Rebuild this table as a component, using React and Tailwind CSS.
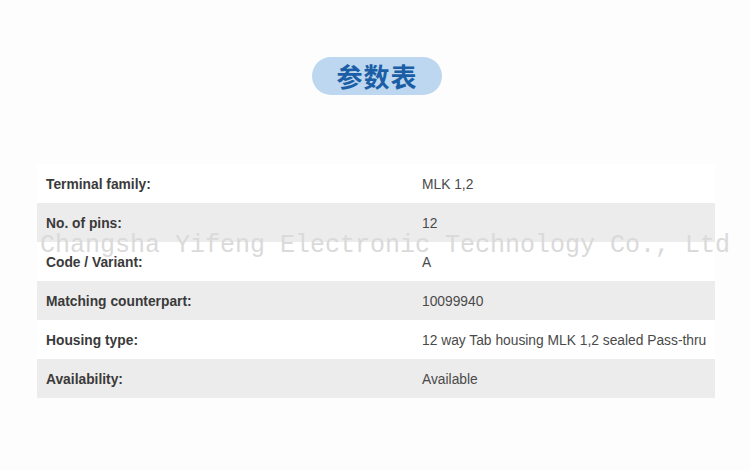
import React from "react";

const rows = [
  { label: "Terminal family:", value: "MLK 1,2" },
  { label: "No. of pins:", value: "12" },
  { label: "Code / Variant:", value: "A" },
  { label: "Matching counterpart:", value: "10099940" },
  { label: "Housing type:", value: "12 way Tab housing MLK 1,2 sealed Pass-thru" },
  { label: "Availability:", value: "Available" },
];

const App = () => {
  return (
    <div className="relative w-[750px] h-[471px] bg-[#fdfdfd] overflow-hidden font-['Liberation_Sans',Arial,sans-serif]">
      <div className="flex justify-center pt-[57px] pl-[4px]">
        <div className="w-[130px] h-[38px] rounded-full bg-[#bcd7ef] flex items-center justify-center">
          <span className="text-[26px] font-bold text-[#1b5ea6] tracking-[1px] font-['Noto_Sans_CJK_SC',sans-serif] leading-none">
            参数表
          </span>
        </div>
      </div>

      <div className="mt-[69px] mx-[37px] w-[678px]">
        {rows.map((row, i) => (
          <div
            key={row.label}
            className={
              "grid grid-cols-[376px_1fr] h-[39px] pt-[3px] items-center text-[13.8px] " +
              (i % 2 === 1 ? "bg-[#ececec]" : "bg-white")
            }
          >
            <div className="pl-[9px] font-bold text-[#3a3a3a]">{row.label}</div>
            <div className="pl-[9px] text-[#4a4a4a]">{row.value}</div>
          </div>
        ))}
      </div>

      {/* watermark */}
      <div className="absolute left-[40px] top-[231px] text-[25px] leading-[30px] text-[#dadada] font-['Liberation_Mono',monospace] whitespace-nowrap pointer-events-none">
        Changsha Yifeng Electronic Technology Co., Ltd
      </div>
    </div>
  );
};

export default App;
